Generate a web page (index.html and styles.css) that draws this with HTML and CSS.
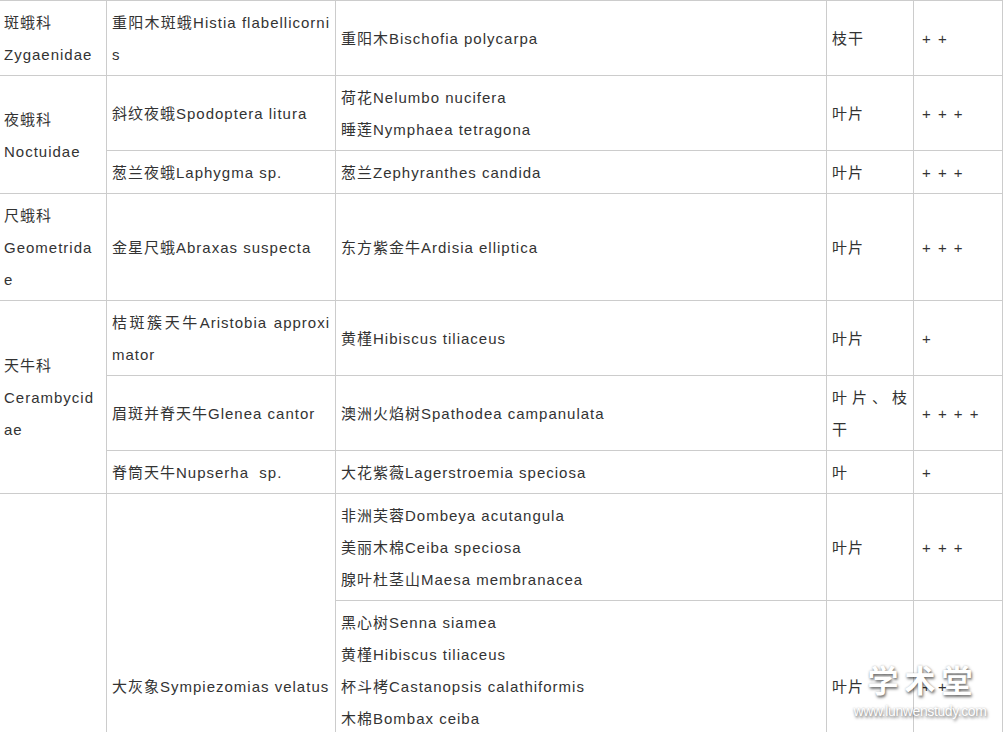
FILE: index.html
```html
<!DOCTYPE html>
<html lang="zh-CN">
<head>
<meta charset="utf-8">
<title>园林植物害虫调查表</title>
<link rel="stylesheet" href="styles.css">
</head>
<body>
<table class="tbl">
  <colgroup>
    <col class="c1"><col class="c2"><col class="c3"><col class="c4"><col class="c5">
  </colgroup>
  <tbody>
    <tr>
      <td>斑蛾科<br>Zygaenidae</td>
      <td>重阳木斑蛾Histia flabellicornis</td>
      <td>重阳木Bischofia polycarpa</td>
      <td>枝干</td>
      <td class="plus">+ +</td>
    </tr>
    <tr>
      <td rowspan="2">夜蛾科<br>Noctuidae</td>
      <td>斜纹夜蛾Spodoptera litura</td>
      <td><div>荷花Nelumbo nucifera</div><div>睡莲Nymphaea tetragona</div></td>
      <td>叶片</td>
      <td class="plus">+ + +</td>
    </tr>
    <tr>
      <td>葱兰夜蛾Laphygma sp.</td>
      <td>葱兰Zephyranthes candida</td>
      <td>叶片</td>
      <td class="plus">+ + +</td>
    </tr>
    <tr>
      <td>尺蛾科<br>Geometridae</td>
      <td>金星尺蛾Abraxas suspecta</td>
      <td>东方紫金牛Ardisia elliptica</td>
      <td>叶片</td>
      <td class="plus">+ + +</td>
    </tr>
    <tr>
      <td rowspan="3">天牛科<br>Cerambycidae</td>
      <td>桔斑簇天牛Aristobia approximator</td>
      <td>黄槿Hibiscus tiliaceus</td>
      <td>叶片</td>
      <td class="plus">+</td>
    </tr>
    <tr>
      <td>眉斑并脊天牛Glenea cantor</td>
      <td>澳洲火焰树Spathodea campanulata</td>
      <td>叶片、枝干</td>
      <td class="plus">+ + + +</td>
    </tr>
    <tr>
      <td>脊筒天牛Nupserha&nbsp; sp.</td>
      <td>大花紫薇Lagerstroemia speciosa</td>
      <td>叶</td>
      <td class="plus">+</td>
    </tr>
    <tr>
      <td rowspan="5">象甲科<br>Curculionidae</td>
      <td rowspan="3">大灰象Sympiezomias velatus</td>
      <td><div>非洲芙蓉Dombeya acutangula</div><div>美丽木棉Ceiba speciosa</div><div>腺叶杜茎山Maesa membranacea</div></td>
      <td>叶片</td>
      <td class="plus">+ + +</td>
    </tr>
    <tr>
      <td><div>黑心树Senna siamea</div><div>黄槿Hibiscus tiliaceus</div><div>杯斗栲Castanopsis calathiformis</div><div>木棉Bombax ceiba</div><div>朴树Celtis sinensis</div></td>
      <td>叶片</td>
      <td class="plus">+ +</td>
    </tr>
    <tr>
      <td><div>小叶榕Ficus microcarpa</div><div>大叶紫薇Lagerstroemia speciosa</div><div>桂花Osmanthus fragrans</div></td>
      <td>叶片</td>
      <td class="plus">+</td>
    </tr>
    <tr>
      <td>绿鳞象甲Hypomeces squamosus</td>
      <td><div>龙眼Dimocarpus longan</div><div>荔枝Litchi chinensis</div><div>芒果Mangifera indica</div></td>
      <td>叶片</td>
      <td class="plus">+ +</td>
    </tr>
    <tr>
      <td>茶丽纹象甲Myllocerinus aurolineatus</td>
      <td><div>山茶Camellia japonica</div><div>杜鹃Rhododendron simsii</div><div>桂花Osmanthus fragrans</div></td>
      <td>叶片</td>
      <td class="plus">+</td>
    </tr>
  </tbody>
</table>
<div class="wm">
  <div class="wm-title">学术堂</div>
  <div class="wm-url">www.lunwenstudy.com</div>
</div>
</body>
</html>
```
FILE: styles.css
```css
html, body {
  margin: 0;
  padding: 0;
  background: #fff;
}

body {
  position: relative;
  font-family: "Liberation Sans", "Noto Sans CJK SC", sans-serif;
  font-size: 15px;
  color: #333;
  letter-spacing: 1px;
}

.tbl {
  border-collapse: collapse;
  table-layout: fixed;
  width: 1005px;
  margin-left: -2px;
}

.c1 { width: 108px; }
.c2 { width: 229px; }
.c3 { width: 491px; }
.c4 { width: 87px; }
.c5 { width: 89px; }

.tbl td {
  border: 1px solid #ccc;
  padding: 6px 5px 4px;
  line-height: 32px;
  vertical-align: middle;
  text-align: justify;
  word-break: break-all;
}

.tbl td.plus {
  padding-left: 8px;
  word-spacing: 1px;
}

.wm {
  position: absolute;
  left: 840px;
  top: 663px;
  width: 160px;
  text-align: center;
  color: #fff;
  letter-spacing: 0;
  text-shadow: 1px 2px 3px rgba(0, 0, 0, 0.55), 0 0 2px rgba(0, 0, 0, 0.25);
}

.wm-title {
  font-family: "Noto Sans CJK SC", sans-serif;
  font-size: 31px;
  font-weight: 700;
  line-height: 31px;
  letter-spacing: 6px;
  text-indent: 6px;
}

.wm-url {
  margin-top: 10px;
  font-family: "Liberation Sans", sans-serif;
  font-size: 14px;
  line-height: 14px;
  letter-spacing: -0.4px;
}
```
